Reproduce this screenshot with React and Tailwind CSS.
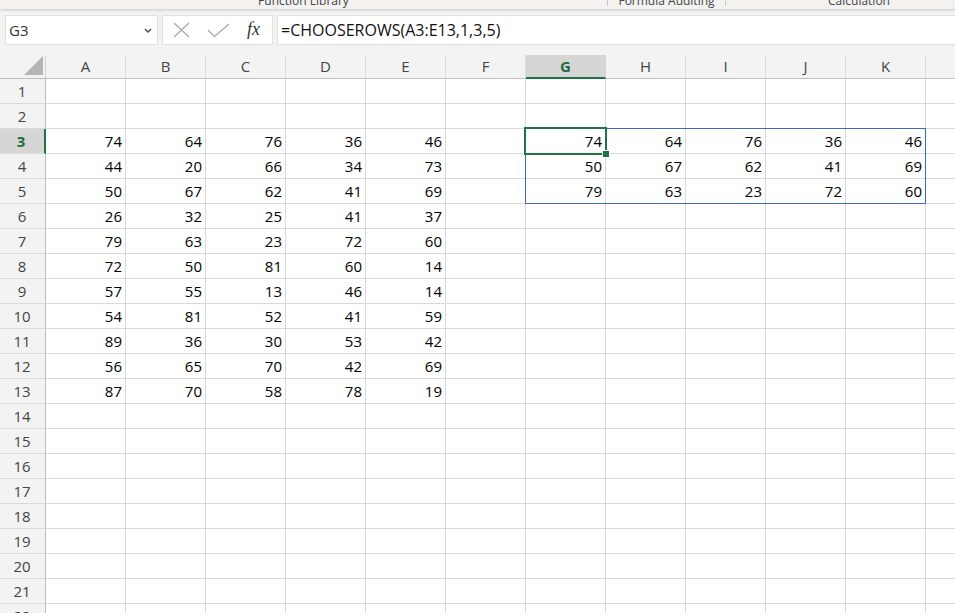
import React from "react";

const COLS = ["A", "B", "C", "D", "E", "F", "G", "H", "I", "J", "K", "L"];

const LEFT = [
  [74, 64, 76, 36, 46],
  [44, 20, 66, 34, 73],
  [50, 67, 62, 41, 69],
  [26, 32, 25, 41, 37],
  [79, 63, 23, 72, 60],
  [72, 50, 81, 60, 14],
  [57, 55, 13, 46, 14],
  [54, 81, 52, 41, 59],
  [89, 36, 30, 53, 42],
  [56, 65, 70, 42, 69],
  [87, 70, 58, 78, 19],
];

const RIGHT = [
  [74, 64, 76, 36, 46],
  [50, 67, 62, 41, 69],
  [79, 63, 23, 72, 60],
];

function cellValue(row, colIdx) {
  if (row >= 3 && row <= 13 && colIdx <= 4) return LEFT[row - 3][colIdx];
  if (row >= 3 && row <= 5 && colIdx >= 6 && colIdx <= 10) return RIGHT[row - 3][colIdx - 6];
  return "";
}

function Ribbon() {
  return (
    <div className="h-[9px] shrink-0 bg-[#f3f2f1] flex overflow-hidden relative z-10 shadow-[0_1px_3px_rgba(0,0,0,0.18)] text-[12px] text-[#444] leading-[16px]">
      <div className="w-[607px] shrink-0 text-center -mt-[7px]">Function Library</div>
      <div className="w-px h-[6px] bg-[#c8c8c8] shrink-0" />
      <div className="w-[117px] shrink-0 text-center -mt-[7px]">Formula Auditing</div>
      <div className="w-px h-[6px] bg-[#c8c8c8] shrink-0" />
      <div className="w-[266px] shrink-0 text-center -mt-[7px]">Calculation</div>
    </div>
  );
}

function FormulaBar() {
  return (
    <div className="shrink-0 flex gap-[4px] pl-[5px] pt-[6px] pb-[10px]">
      <div className="w-[153px] h-[30px] shrink-0 bg-white border border-[#e1e1e1] flex items-center pl-[3px] pr-[5px] text-[15px] text-[#333]">
        <span className="flex-1">G3</span>
        <svg width="8" height="5" viewBox="0 0 8 5" className="mt-[1px]">
          <path d="M1 1 L4 4 L7 1" fill="none" stroke="#444" strokeWidth="1.3" />
        </svg>
      </div>
      <div className="w-[111px] h-[30px] shrink-0 bg-white border border-[#e1e1e1] relative">
        <svg width="17" height="16" viewBox="0 0 17 16" className="absolute left-[10px] top-[6px]">
          <path d="M1 1 L16 15 M16 1 L1 15" fill="none" stroke="#a3a3a3" strokeWidth="1.1" />
        </svg>
        <svg width="23" height="15" viewBox="0 0 23 15" className="absolute left-[44px] top-[7px]">
          <path d="M1 7 L7.5 13.5 L22 1" fill="none" stroke="#a3a3a3" strokeWidth="1.1" />
        </svg>
        <span className="absolute left-[84px] top-[3px] font-['Liberation_Serif',serif] italic text-[18px] text-[#333] leading-[20px]">
          fx
        </span>
      </div>
      <div className="w-[700px] h-[30px] shrink-0 bg-white border border-[#e1e1e1] flex items-center pl-[3px] text-[16px] text-[#111]">
        =CHOOSEROWS(A3:E13,1,3,5)
      </div>
    </div>
  );
}

function HeaderRow() {
  return (
    <div className="flex h-[24px] shrink-0">
      <div className="w-[46px] shrink-0 border-r border-b border-r-[#d4d4d4] border-b-[#bdbdbd] bg-[#f3f3f3] relative">
        <svg width="19" height="19" viewBox="0 0 19 19" className="absolute left-[24px] top-[1px]">
          <path d="M19 0 L19 19 L0 19 Z" fill="#b5b5b5" />
        </svg>
      </div>
      {COLS.map((c) =>
        c === "G" ? (
          <div
            key={c}
            className="w-[80px] shrink-0 border-r border-[#d4d4d4] border-b-2 border-b-[#217346] bg-[#d6d6d6] flex items-center justify-center text-[15px] font-bold text-[#1e6b41]"
          >
            {c}
          </div>
        ) : (
          <div
            key={c}
            className="w-[80px] shrink-0 border-r border-r-[#dcdcdc] border-b border-b-[#bdbdbd] bg-[#f3f3f3] flex items-center justify-center text-[15px] text-[#444]"
          >
            {c}
          </div>
        )
      )}
    </div>
  );
}

function Row({ n }) {
  const selected = n === 3;
  return (
    <div className="flex h-[25px] shrink-0">
      {selected ? (
        <div className="w-[46px] shrink-0 border-r-2 border-r-[#217346] border-b border-b-[#dadada] bg-[#d6d6d6] flex items-center justify-center pr-[2px] text-[15px] font-bold text-[#1e6b41]">
          {n}
        </div>
      ) : (
        <div className="w-[46px] shrink-0 border-r border-r-[#bdbdbd] border-b border-b-[#dadada] bg-[#f3f3f3] flex items-center justify-center pr-[1px] text-[15px] text-[#444]">
          {n}
        </div>
      )}
      {COLS.map((c, i) => (
        <div
          key={c}
          className="w-[80px] shrink-0 border-r border-b border-[#d9d9d9] bg-white flex items-end justify-end pr-[3px] pb-[2px] text-[15px] leading-[20px] text-black"
        >
          {cellValue(n, i)}
        </div>
      ))}
    </div>
  );
}

export default function App() {
  const rows = Array.from({ length: 22 }, (_, i) => i + 1);
  return (
    <div className="w-[955px] h-[613px] overflow-hidden bg-[#f3f3f3] flex flex-col font-['Open_Sans',sans-serif]">
      <Ribbon />
      <FormulaBar />
      <div className="relative flex flex-col">
        <HeaderRow />
        {rows.map((n) => (
          <Row key={n} n={n} />
        ))}
        <div className="absolute left-[525px] top-[73px] w-[401px] h-[76px] border border-[#3b6cc4] pointer-events-none" />
        <div className="absolute left-[524px] top-[72px] w-[83px] h-[28px] border-2 border-[#217346] pointer-events-none" />
        <div className="absolute left-[602px] top-[95px] w-[8px] h-[8px] bg-[#217346] border border-white pointer-events-none" />
      </div>
    </div>
  );
}
